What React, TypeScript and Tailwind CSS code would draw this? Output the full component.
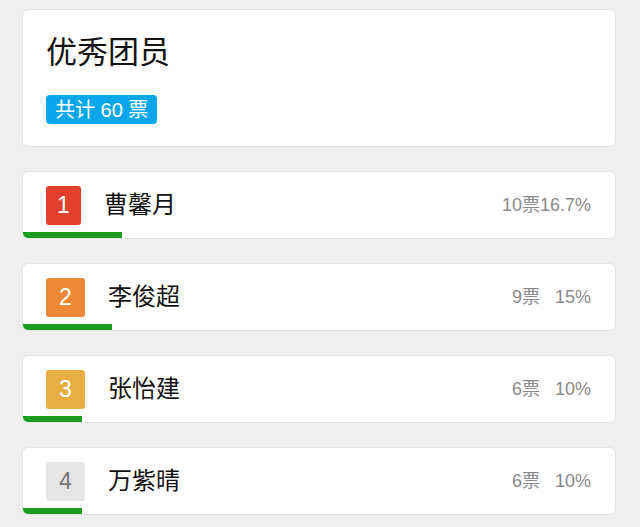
import React from "react";

/* -------------------------------------------------------------------------- */
/* Data                                                                       */
/* -------------------------------------------------------------------------- */

interface Candidate {
  rank: number;
  name: string;
  votes: number;
  percent: string;
  share: number;
}

const TOTAL_VOTES = 60;

const candidates: Candidate[] = [
  { rank: 1, name: "曹馨月", votes: 10, percent: "16.7%", share: 16.7 },
  { rank: 2, name: "李俊超", votes: 9, percent: "15%", share: 15 },
  { rank: 3, name: "张怡建", votes: 6, percent: "10%", share: 10 },
  { rank: 4, name: "万紫晴", votes: 6, percent: "10%", share: 10 },
];

/**
 * Colour and width of the rank badge; the top three get medal tones.
 */
function getRankClasses(rank: number): string {
  switch (rank) {
    case 1:
      return "w-[35px] bg-[#e2402f] text-white";
    case 2:
      return "w-[39px] bg-[#ed8935] text-white";
    case 3:
      return "w-[39px] bg-[#e8ae43] text-white";
    default:
      return "w-[39px] bg-[#e6e6e6] text-[#777777]";
  }
}

/* -------------------------------------------------------------------------- */
/* Helper Components                                                          */
/* -------------------------------------------------------------------------- */

function CandidateRow({ candidate }: { candidate: Candidate }) {
  return (
    <div className="relative flex h-[68px] items-center overflow-hidden rounded-[6px] border border-[#e4e4e4] bg-white pl-[23px] pr-[24px]">
      <div
        className={[
          "flex h-[39px] shrink-0 items-center justify-center rounded-[3px] text-[23px]",
          getRankClasses(candidate.rank),
        ].join(" ")}
      >
        {candidate.rank}
      </div>

      <div className="ml-[23px] flex-1 text-[24px] text-[#111111]">
        {candidate.name}
      </div>

      <div className="flex items-center text-[18px] text-[#8a8a8a]">
        <span>{candidate.votes}票</span>
        <span className="w-[51px] text-right">{candidate.percent}</span>
      </div>

      {/* Vote share bar */}
      <div
        className="absolute bottom-0 left-0 h-[6px] bg-[#1a9c1c]"
        style={{ width: `${candidate.share}%` }}
      />
    </div>
  );
}

/* -------------------------------------------------------------------------- */
/* Main Component                                                             */
/* -------------------------------------------------------------------------- */

export default function App() {
  return (
    <div
      className="min-h-[527px] w-[640px] bg-[#efefef] pt-[9px]"
      style={{ fontFamily: '"Liberation Sans", "Noto Sans CJK SC", sans-serif' }}
    >
      <div className="ml-[22px] flex w-[594px] flex-col gap-[24px]">
        {/* Header */}
        <div className="rounded-[6px] border border-[#e4e4e4] bg-white px-[23px] pb-[22px] pt-[27px]">
          <h1 className="text-[31px] leading-none text-[#111111]">优秀团员</h1>
          <div className="mt-[27px] inline-flex h-[29px] items-center rounded-[4px] bg-[#08a6ea] px-[9px] text-[20px] text-white">
            共计 {TOTAL_VOTES} 票
          </div>
        </div>

        {candidates.map((c) => (
          <CandidateRow key={c.rank} candidate={c} />
        ))}
      </div>
    </div>
  );
}
